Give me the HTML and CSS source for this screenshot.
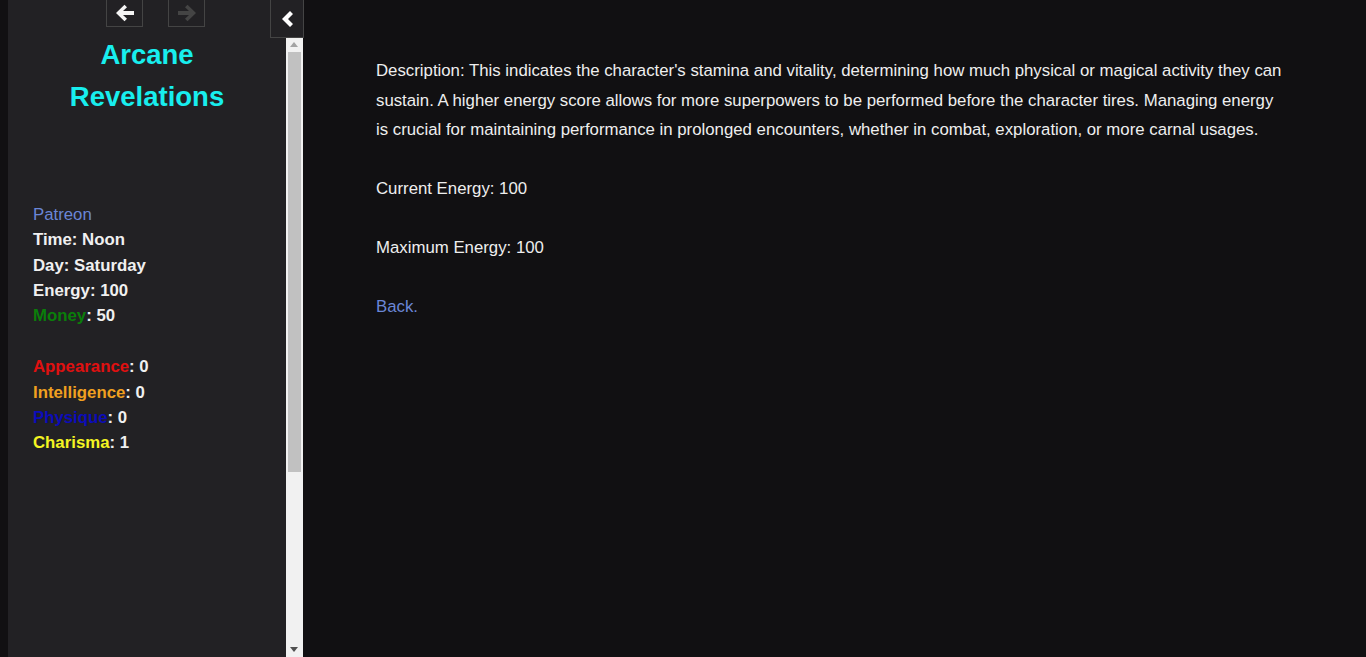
FILE: index.html
```html
<!DOCTYPE html>
<html>
<head>
<meta charset="utf-8">
<link rel="stylesheet" href="styles.css">
</head>
<body>
<aside class="ui-bar">
  <div class="bar-content">
    <nav class="history">
      <button class="hist-btn">
        <svg width="20" height="18" viewBox="0 0 20 18"><path d="M9.5 0.8 L1 9 L9.5 17.2 L12 14.7 L8 11 H19 V7 H8 L12 3.3 Z" fill="#f4f4f4"/></svg>
      </button>
      <button class="hist-btn disabled">
        <svg width="20" height="18" viewBox="0 0 20 18"><path d="M10.5 0.8 L19 9 L10.5 17.2 L8 14.7 L12 11 H1 V7 H12 L8 3.3 Z" fill="#444"/></svg>
      </button>
    </nav>
    <h1 class="title">Arcane<br>Revelations</h1>
    <div class="stats">
      <a class="link">Patreon</a>
      <div class="stat">Time: Noon</div>
      <div class="stat">Day: Saturday</div>
      <div class="stat">Energy: 100</div>
      <div class="stat"><span class="money">Money</span>: 50</div>
      <div class="gap"></div>
      <div class="stat"><span class="appearance">Appearance</span>: 0</div>
      <div class="stat"><span class="intel">Intelligence</span>: 0</div>
      <div class="stat"><span class="physique">Physique</span>: 0</div>
      <div class="stat"><span class="charisma">Charisma</span>: 1</div>
    </div>
  </div>
  <div class="scrollbar">
    <div class="sb-arrow up"></div>
    <div class="sb-track"><div class="sb-thumb"></div></div>
    <div class="sb-arrow down"></div>
  </div>
  <button class="toggle">
    <svg width="14" height="18" viewBox="0 0 14 18"><path d="M10 1 L13 4 L8 9 L13 14 L10 17 L2 9 Z" fill="#fff"/></svg>
  </button>
</aside>
<main class="passage">
  <p>Description: This indicates the character's stamina and vitality, determining how much physical or magical activity they can sustain. A higher energy score allows for more superpowers to be performed before the character tires. Managing energy is crucial for maintaining performance in prolonged encounters, whether in combat, exploration, or more carnal usages.</p>
  <p>Current Energy: 100</p>
  <p>Maximum Energy: 100</p>
  <p><a class="link">Back.</a></p>
</main>
</body>
</html>
```

FILE: styles.css
```css
html, body {
  margin: 0;
  height: 100%;
}
body {
  background: #111012;
  color: #eee;
  font-family: "Liberation Sans", Arial, sans-serif;
  font-size: 16.8px;
  display: flex;
  overflow: hidden;
}
.ui-bar {
  position: relative;
  margin-left: 8px;
  width: 295px;
  height: 657px;
  background: #222124;
  display: flex;
  flex-shrink: 0;
}
.bar-content {
  width: 278px;
  flex-shrink: 0;
}
.history {
  display: flex;
  justify-content: center;
  gap: 25px;
  padding-left: 17px;
  margin-top: -2px;
}
.hist-btn {
  width: 37px;
  height: 29px;
  padding: 0;
  background: transparent;
  border: 1px solid #444;
  display: flex;
  align-items: center;
  justify-content: center;
}
.title {
  margin: 7px 0 0 0;
  text-align: center;
  color: #18eeee;
  font-size: 27.5px;
  line-height: 42px;
  font-weight: bold;
}
.stats {
  margin-top: 84px;
  padding-left: 25px;
  line-height: 25.3px;
}
.stat {
  font-weight: bold;
  color: #f0f0f0;
}
.gap {
  height: 26px;
}
.link {
  color: #6a86d6;
  cursor: pointer;
}
.money { color: #0a7e0a; }
.appearance { color: #e01010; }
.intel { color: #f0a020; }
.physique { color: #0c0cb8; }
.charisma { color: #f4f422; }
.scrollbar {
  width: 17px;
  margin-top: 36px;
  background: #f1f1f1;
  display: flex;
  flex-direction: column;
  border-top: 2px solid #fff;
}
.sb-arrow {
  height: 14px;
  position: relative;
}
.sb-arrow.up::after {
  content: "";
  position: absolute;
  left: 4px;
  top: 4px;
  border-left: 4px solid transparent;
  border-right: 4px solid transparent;
  border-bottom: 5px solid #a3a3a3;
}
.sb-arrow.down::after {
  content: "";
  position: absolute;
  left: 4px;
  top: 4px;
  border-left: 4px solid transparent;
  border-right: 4px solid transparent;
  border-top: 5px solid #505050;
}
.sb-track {
  flex: 1;
  padding: 0 2px;
}
.sb-thumb {
  height: 420px;
  background: #c1c1c1;
}
.toggle {
  position: absolute;
  left: 262px;
  top: -1px;
  width: 34px;
  height: 39px;
  padding: 0;
  background: #222124;
  border: 1px solid #444;
  display: flex;
  align-items: center;
  justify-content: center;
}
.passage {
  padding: 56px 0 0 73px;
  width: 909px;
  line-height: 29.5px;
}
.passage p {
  margin: 0 0 29.5px 0;
}
```
